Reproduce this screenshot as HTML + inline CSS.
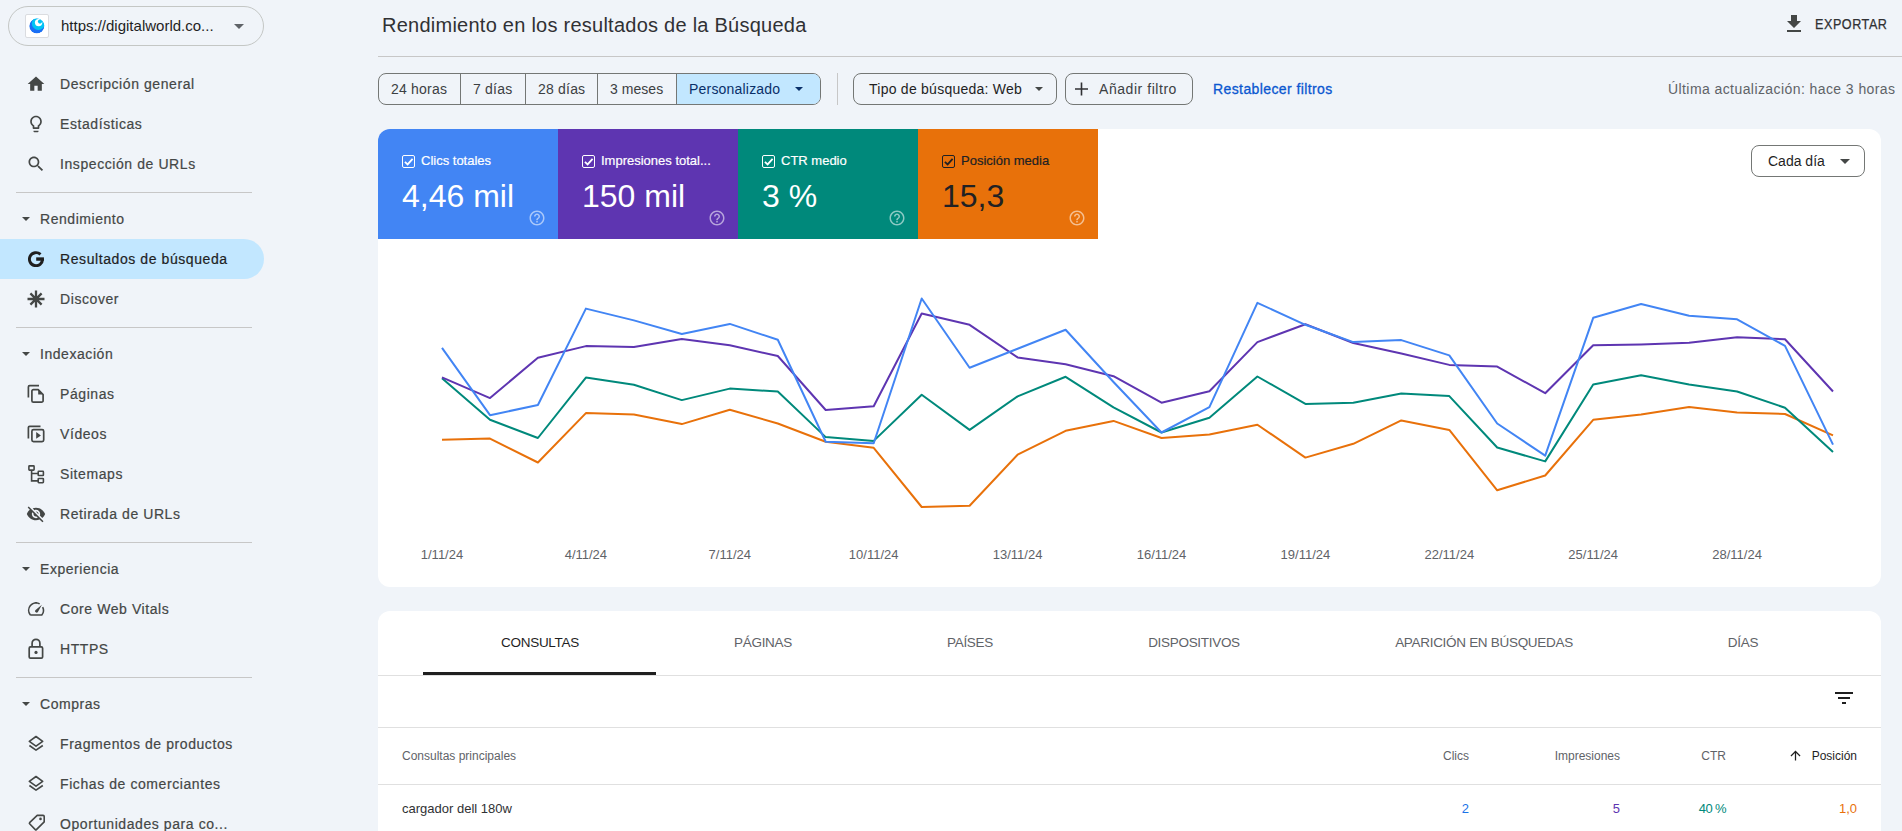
<!DOCTYPE html>
<html><head><meta charset="utf-8">
<style>
*{box-sizing:border-box;margin:0;padding:0}
html,body{width:1902px;height:831px;overflow:hidden;background:#f0f4f9;font-family:"Liberation Sans",sans-serif;color:#1f1f1f}
.a{position:absolute;white-space:nowrap}
.nav{position:absolute;left:60px;font-size:14px;letter-spacing:0.58px;color:#444746;line-height:20px;-webkit-text-stroke:0.2px currentColor}
.ico{position:absolute;left:25px;width:20px;height:20px}
.hdr{position:absolute;left:40px;font-size:14px;letter-spacing:0.55px;color:#444746;line-height:20px;-webkit-text-stroke:0.2px currentColor}
.tri{position:absolute;left:22px;width:0;height:0;border-left:4px solid transparent;border-right:4px solid transparent;border-top:4px solid #444746}
.div{position:absolute;left:16px;width:236px;height:1px;background:#c7c7c7}
.btn{position:absolute;top:73px;height:32px;border:1px solid #747775;border-radius:8px}
.seg{position:absolute;top:74px;height:32px;font-size:14px;line-height:30px;color:#3c4043}
.tile{position:absolute;top:129px;width:180px;height:110px;color:#fff}
.tile .cb{position:absolute;left:24px;top:26px;width:13px;height:13px;border:1.5px solid #fff;border-radius:2px}
.tile .lb{position:absolute;left:43px;top:24px;font-size:13px;line-height:16px;white-space:nowrap;-webkit-text-stroke:0.2px currentColor}
.tile .val{position:absolute;left:24px;top:47px;font-size:32px;line-height:40px;white-space:nowrap}
.tile .hp{position:absolute;left:150px;top:80px;width:18px;height:18px}
.xl{position:absolute;top:547px;font-size:13px;line-height:16px;color:#5f6368;width:80px;text-align:center}
.tab{position:absolute;top:633px;font-size:13.5px;letter-spacing:-0.3px;line-height:20px;color:#5f6368;text-align:center;width:240px}
.th{position:absolute;top:748px;font-size:12px;line-height:16px;color:#5f6368;text-align:right}
.td{position:absolute;top:800px;font-size:13px;line-height:18px;text-align:right;color:#303134}
</style></head><body>

<!-- ===== SIDEBAR ===== -->
<div class="a" style="left:8px;top:6px;width:256px;height:40px;border:1px solid #c4c7c5;border-radius:20px"></div>
<div class="a" style="left:25px;top:14px;width:24px;height:24px;background:#fff;border:1px solid #dadce0;border-radius:2px"></div>
<svg class="a" style="left:29px;top:18px" width="16" height="16" viewBox="0 0 16 16">
 <defs><clipPath id="fc"><circle cx="7.8" cy="8" r="7.6"/></clipPath></defs>
 <g clip-path="url(#fc)">
 <circle cx="7.8" cy="8" r="7.6" fill="#1a6ff5"/>
 <circle cx="9.4" cy="5.4" r="6.6" fill="#00c4f4"/>
 <circle cx="9.6" cy="4.6" r="3.7" fill="#fff"/>
 <circle cx="11" cy="3.6" r="2.1" fill="#00c4f4"/>
 </g>
</svg>
<div class="a" style="left:61px;top:16px;font-size:15px;line-height:20px;color:#1f1f1f">https://digitalworld.co...</div>
<div class="a" style="left:234px;top:24px;width:0;height:0;border-left:5px solid transparent;border-right:5px solid transparent;border-top:5px solid #5f6368"></div>

<!-- nav items -->
<svg class="ico" style="top:74px;left:26px" viewBox="0 0 24 24"><path fill="#444746" d="M10 20v-6h4v6h5v-8h3L12 3 2 12h3v8z"/></svg>
<div class="nav" style="top:74px">Descripción general</div>
<svg class="ico" style="top:114px;left:26px" viewBox="0 0 24 24"><path fill="#444746" d="M9 21c0 .55.45 1 1 1h4c.55 0 1-.45 1-1v-1H9v1zm3-19C8.14 2 5 5.14 5 9c0 2.38 1.19 4.47 3 5.74V17c0 .55.45 1 1 1h6c.55 0 1-.45 1-1v-2.26c1.81-1.270 3-3.36 3-5.74 0-3.86-3.14-7-7-7zm2.85 11.1l-.85.6V16h-4v-2.3l-.85-.6C7.8 12.16 7 10.630 7 9c0-2.76 2.24-5 5-5s5 2.24 5 5c0 1.63-.8 3.16-2.15 4.1z"/></svg>
<div class="nav" style="top:114px">Estadísticas</div>
<svg class="ico" style="top:154px;left:26px" viewBox="0 0 24 24"><path fill="#444746" d="M15.5 14h-.79l-.28-.27C15.41 12.59 16 11.11 16 9.5 16 5.91 13.09 3 9.5 3S3 5.910 3 9.5 5.91 16 9.5 16c1.61 0 3.09-.59 4.23-1.57l.27.28v.79l5 4.99L20.49 19l-4.99-5zm-6 0C7.01 14 5 11.99 5 9.5S7.01 5 9.5 5 14 7.01 14 9.5 11.99 14 9.5 14z"/></svg>
<div class="nav" style="top:154px">Inspección de URLs</div>

<div class="div" style="top:192px"></div>
<div class="tri" style="top:217px"></div>
<div class="hdr" style="top:209px">Rendimiento</div>

<div class="a" style="left:0;top:239px;width:264px;height:40px;background:#c2e7ff;border-radius:0 20px 20px 0"></div>
<svg class="a" style="left:28px;top:251px" width="16" height="16" viewBox="0 0 16 16"><path fill="none" stroke="#1f1f1f" stroke-width="2.9" d="M12.5 3.4A6.55 6.55 0 1 0 14.55 8"/><rect x="8.2" y="6.35" width="7.75" height="3.4" fill="#1f1f1f"/></svg>
<div class="nav" style="top:249px;color:#1f1f1f">Resultados de búsqueda</div>
<svg class="a" style="left:27px;top:290px" width="18" height="18" viewBox="0 0 18 18"><g stroke="#444746" stroke-width="2.3"><path d="M9 0.5V17.5M0.5 9H17.5M3.4 3.4L14.6 14.6M14.6 3.4L3.4 14.6"/><circle cx="9" cy="9" r="2.6" fill="#444746" stroke="none"/></g></svg>
<div class="nav" style="top:289px">Discover</div>

<div class="div" style="top:327px"></div>
<div class="tri" style="top:352px"></div>
<div class="hdr" style="top:344px">Indexación</div>

<svg class="a" style="left:22px;top:382px" width="28" height="28" viewBox="0 0 28 28"><g fill="none" stroke="#444746" stroke-width="1.7" stroke-linejoin="round"><path d="M6.4 15.5V4.9a1.2 1.2 0 0 1 1.2-1.2H17"/><path d="M16.2 7.6H11.4a1.5 1.5 0 0 0-1.5 1.5V18.7a1.5 1.5 0 0 0 1.5 1.5H19.6a1.5 1.5 0 0 0 1.5-1.5V12.5z"/></g><path fill="#444746" d="M16.2 7.6V12.6H21.1z"/></svg>
<div class="nav" style="top:384px">Páginas</div>
<svg class="a" style="left:22px;top:422px" width="28" height="28" viewBox="0 0 28 28"><g fill="none" stroke="#444746" stroke-width="1.7" stroke-linejoin="round"><path d="M6.4 16.5V5.6a1.2 1.2 0 0 1 1.2-1.2H18.5"/><rect x="9.9" y="7.6" width="11.8" height="12" rx="1.6"/></g><path fill="#444746" d="M14.2 10V16.8L18.9 13.4z"/></svg>
<div class="nav" style="top:424px">Vídeos</div>
<svg class="a" style="left:22px;top:462px" width="28" height="28" viewBox="0 0 28 28"><g fill="none" stroke="#444746" stroke-width="1.6"><rect x="6.9" y="3.9" width="5.2" height="4.2" rx=".6"/><rect x="16.2" y="9.3" width="5.2" height="4.2" rx=".6"/><rect x="16.2" y="16.5" width="5.2" height="4.2" rx=".6"/><path d="M9.6 8.1V18.9H16.2M9.6 11.5H16.2"/></g></svg>
<div class="nav" style="top:464px">Sitemaps</div>
<svg class="a" style="left:26px;top:504px" width="20" height="20" viewBox="0 0 24 24"><path fill="#444746" d="M12 7c2.76 0 5 2.24 5 5 0 .65-.13 1.26-.36 1.83l2.92 2.92c1.51-1.26 2.7-2.89 3.43-4.75-1.73-4.39-6-7.5-11-7.5-1.4 0-2.74.25-3.98.7l2.16 2.16C10.74 7.13 11.35 7 12 7zM2 4.27l2.28 2.28.46.46C3.08 8.3 1.78 10.02 1 12c1.73 4.39 6 7.5 11 7.5 1.55 0 3.03-.3 4.38-.84l.42.42L19.730 22 21 20.73 3.27 3 2 4.27zM7.53 9.8l1.55 1.55c-.05.21-.08.43-.08.65 0 1.66 1.34 3 3 3 .22 0 .44-.03.65-.08l1.55 1.55c-.67.33-1.41.53-2.2.53-2.76 0-5-2.24-5-5 0-.79.2-1.53.53-2.2zm4.31-.78l3.15 3.15.02-.16c0-1.66-1.34-3-3-3l-.17.01z"/></svg>
<div class="nav" style="top:504px">Retirada de URLs</div>

<div class="div" style="top:542px"></div>
<div class="tri" style="top:567px"></div>
<div class="hdr" style="top:559px">Experiencia</div>

<svg class="a" style="left:22px;top:596px" width="28" height="28" viewBox="0 0 28 28"><g fill="none" stroke="#444746" stroke-width="1.6"><path d="M8.3 19A7.4 7.4 0 0 1 17.64 7.88M20.67 11.04A7.4 7.4 0 0 1 19.8 19H8.3"/></g><path fill="#444746" d="M19.9 8.8L15.9 15.9A1.5 1.5 0 0 1 13.3 14.2z"/><rect x="12.9" y="6.1" width="2.4" height="1.3" rx=".6" fill="#444746"/></svg>
<div class="nav" style="top:599px">Core Web Vitals</div>
<svg class="a" style="left:22px;top:636px" width="28" height="28" viewBox="0 0 28 28"><g fill="none" stroke="#444746" stroke-width="1.7"><rect x="7.2" y="10.9" width="13.4" height="11.3" rx="1.3"/><path d="M10.1 10.9V7.2a3.9 3.9 0 0 1 7.8 0V10.9"/></g><circle cx="14" cy="16.4" r="1.6" fill="#444746"/></svg>
<div class="nav" style="top:639px">HTTPS</div>

<div class="div" style="top:677px"></div>
<div class="tri" style="top:702px"></div>
<div class="hdr" style="top:694px">Compras</div>

<svg class="a" style="left:22px;top:730px" width="28" height="28" viewBox="0 0 28 28"><g fill="none" stroke="#444746" stroke-width="1.6" stroke-linejoin="round"><path d="M14 6.5L20.7 11.4 14 16.2 7.3 11.4z"/><path d="M7.4 15.5L14 20.2 20.8 15.5"/></g></svg>
<div class="nav" style="top:734px">Fragmentos de productos</div>
<svg class="a" style="left:22px;top:770px" width="28" height="28" viewBox="0 0 28 28"><g fill="none" stroke="#444746" stroke-width="1.6" stroke-linejoin="round"><path d="M14 6.5L20.7 11.4 14 16.2 7.3 11.4z"/><path d="M7.4 15.5L14 20.2 20.8 15.5"/></g></svg>
<div class="nav" style="top:774px">Fichas de comerciantes</div>
<svg class="a" style="left:22px;top:810px" width="28" height="28" viewBox="0 0 28 28"><g fill="none" stroke="#444746" stroke-width="1.6" stroke-linejoin="round"><path d="M15.2 5.4H21.1a1.1 1.1 0 0 1 1.1 1.1V11.9L14.4 19.6a.8 .8 0 0 1-1.1 0L7.6 13.8a.8 .8 0 0 1 0-1.1z"/></g><circle cx="18.5" cy="8.9" r="1.3" fill="#444746"/></svg>
<div class="nav" style="top:814px">Oportunidades para co...</div>

<!-- ===== HEADER ===== -->
<div class="a" style="left:382px;top:13px;font-size:20px;line-height:24px;letter-spacing:0.25px;color:#303134">Rendimiento en los resultados de la Búsqueda</div>
<svg class="a" style="left:1782px;top:12px" width="24" height="24" viewBox="0 0 24 24"><path fill="#444746" d="M19 9h-4V3H9v6H5l7 7 7-7zM5 18v2h14v-2H5z"/></svg>
<div class="a" style="left:1815px;top:14px;font-size:14px;line-height:20px;letter-spacing:0.6px;color:#303134;-webkit-text-stroke:0.25px #303134;transform:scaleX(0.9);transform-origin:left">EXPORTAR</div>
<div class="a" style="left:378px;top:56px;width:1524px;height:1px;background:#c7c7c7"></div>

<!-- ===== FILTER ROW ===== -->
<div class="btn" style="left:378px;width:443px"></div>
<div class="a" style="left:676px;top:74px;width:144px;height:30px;background:#c2e7ff;border-radius:0 7px 7px 0"></div>
<div class="a" style="left:460px;top:73px;width:1px;height:32px;background:#747775"></div>
<div class="a" style="left:525px;top:73px;width:1px;height:32px;background:#747775"></div>
<div class="a" style="left:597px;top:73px;width:1px;height:32px;background:#747775"></div>
<div class="a" style="left:676px;top:73px;width:1px;height:32px;background:#747775"></div>
<div class="seg" style="left:391px;letter-spacing:0.2px">24 horas</div>
<div class="seg" style="left:473px;letter-spacing:0.2px">7 días</div>
<div class="seg" style="left:538px;letter-spacing:0.2px">28 días</div>
<div class="seg" style="left:610px;letter-spacing:0.05px">3 meses</div>
<div class="seg" style="left:689px;letter-spacing:0.2px;color:#0a3069">Personalizado</div>
<div class="a" style="left:795px;top:87px;border-left:4.5px solid transparent;border-right:4.5px solid transparent;border-top:4.5px solid #0a3069"></div>
<div class="a" style="left:837px;top:73px;width:1px;height:32px;background:#c7c7c7"></div>

<div class="btn" style="left:853px;width:204px"></div>
<div class="seg" style="left:869px;letter-spacing:0.25px;color:#1f1f1f">Tipo de búsqueda: Web</div>
<div class="a" style="left:1035px;top:87px;border-left:4.5px solid transparent;border-right:4.5px solid transparent;border-top:4.5px solid #444746"></div>
<div class="btn" style="left:1065px;width:128px"></div>
<svg class="a" style="left:1074px;top:82px" width="15" height="14" viewBox="0 0 15 14"><path stroke="#303134" stroke-width="1.6" d="M7.5 0.5V13.5M1 7H14"/></svg>
<div class="seg" style="left:1099px;letter-spacing:0.55px">Añadir filtro</div>
<div class="seg" style="left:1213px;letter-spacing:0.4px;color:#0b57d0;-webkit-text-stroke:0.3px #0b57d0">Restablecer filtros</div>
<div class="a" style="left:1668px;top:79px;font-size:14px;line-height:20px;letter-spacing:0.42px;color:#5f6368">Última actualización: hace 3 horas</div>

<!-- ===== CHART CARD ===== -->
<div class="a" style="left:378px;top:129px;width:1503px;height:458px;background:#fff;border-radius:12px"></div>
<div class="tile" style="left:378px;background:#4285f4;border-top-left-radius:12px">
 <div class="cb"></div><svg class="a" style="left:26px;top:28px" width="10" height="10" viewBox="0 0 10 10"><path d="M0.9 4.9L3.6 7.4 8.6 1.9" fill="none" stroke="#fff" stroke-width="1.8"/></svg>
 <div class="lb">Clics totales</div><div class="val">4,46 mil</div>
 <svg class="hp" viewBox="0 0 24 24"><path fill="rgba(255,255,255,.55)" d="M11 18h2v-2h-2v2zm1-16C6.48 2 2 6.48 2 12s4.48 10 10 10 10-4.48 10-10S17.52 2 12 2zm0 18c-4.41 0-8-3.59-8-8s3.59-8 8-8 8 3.59 8 8-3.59 8-8 8zm0-14c-2.21 0-4 1.79-4 4h2c0-1.1.9-2 2-2s2 .9 2 2c0 2-3 1.75-3 5h2c0-2.25 3-2.5 3-5 0-2.21-1.79-4-4-4z"/></svg>
</div>
<div class="tile" style="left:558px;background:#5e35b1">
 <div class="cb"></div><svg class="a" style="left:26px;top:28px" width="10" height="10" viewBox="0 0 10 10"><path d="M0.9 4.9L3.6 7.4 8.6 1.9" fill="none" stroke="#fff" stroke-width="1.8"/></svg>
 <div class="lb">Impresiones total...</div><div class="val">150 mil</div>
 <svg class="hp" viewBox="0 0 24 24"><path fill="rgba(255,255,255,.55)" d="M11 18h2v-2h-2v2zm1-16C6.48 2 2 6.48 2 12s4.48 10 10 10 10-4.48 10-10S17.52 2 12 2zm0 18c-4.41 0-8-3.59-8-8s3.590-8 8-8 8 3.59 8 8-3.59 8-8 8zm0-14c-2.21 0-4 1.79-4 4h2c0-1.1.9-2 2-2s2 .9 2 2c0 2-3 1.75-3 5h2c0-2.25 3-2.5 3-5 0-2.21-1.79-4-4-4z"/></svg>
</div>
<div class="tile" style="left:738px;background:#00897b">
 <div class="cb"></div><svg class="a" style="left:26px;top:28px" width="10" height="10" viewBox="0 0 10 10"><path d="M0.9 4.9L3.6 7.4 8.6 1.9" fill="none" stroke="#fff" stroke-width="1.8"/></svg>
 <div class="lb">CTR medio</div><div class="val">3 %</div>
 <svg class="hp" viewBox="0 0 24 24"><path fill="rgba(255,255,255,.55)" d="M11 18h2v-2h-2v2zm1-16C6.48 2 2 6.48 2 12s4.48 10 10 10 10-4.48 10-10S17.52 2 12 2zm0 18c-4.41 0-8-3.59-8-8s3.59-8 8-8 8 3.59 8 8-3.59 8-8 8zm0-14c-2.21 0-4 1.79-4 4h2c0-1.1.9-2 2-2s2 .9 2 2c0 2-3 1.75-3 5h2c0-2.25 3-2.5 3-5 0-2.21-1.79-4-4-4z"/></svg>
</div>
<div class="tile" style="left:918px;background:#e8710a;color:#202124">
 <div class="cb" style="border-color:#202124"></div><svg class="a" style="left:26px;top:28px" width="10" height="10" viewBox="0 0 10 10"><path d="M0.9 4.9L3.6 7.4 8.6 1.9" fill="none" stroke="#202124" stroke-width="1.8"/></svg>
 <div class="lb">Posición media</div><div class="val">15,3</div>
 <svg class="hp" viewBox="0 0 24 24"><path fill="rgba(255,255,255,.55)" d="M11 18h2v-2h-2v2zm1-16C6.48 2 2 6.48 2 12s4.48 10 10 10 10-4.48 10-10S17.52 2 12 2zm0 18c-4.41 0-8-3.59-8-8s3.59-8 8-8 8 3.59 8 8-3.59 8-8 8zm0-14c-2.21 0-4 1.79-4 4h2c0-1.1.9-2 2-2s2 .9 2 2c0 2-3 1.75-3 5h2c0-2.25 3-2.5 3-5 0-2.21-1.79-4-4-4z"/></svg>
</div>

<div class="a" style="left:1751px;top:145px;width:114px;height:32px;border:1px solid #747775;border-radius:8px"></div>
<div class="a" style="left:1768px;top:151px;font-size:14px;line-height:20px;color:#1f1f1f">Cada día</div>
<div class="a" style="left:1840px;top:159px;border-left:5px solid transparent;border-right:5px solid transparent;border-top:5px solid #444746"></div>

<!--CHART-->
<svg class="a" style="left:0;top:0" width="1902" height="831" viewBox="0 0 1902 831">
 <polyline fill="none" stroke="#e8710a" stroke-width="2" stroke-linejoin="round" points="442.0,439.7 490.0,438.6 537.9,462.5 585.9,413.1 633.9,414.6 681.8,424.1 729.8,409.7 777.8,423.5 825.7,441.7 873.7,447.8 921.7,507.0 969.6,505.8 1017.6,454.7 1065.6,430.8 1113.5,420.9 1161.5,438.0 1209.4,434.5 1257.4,424.7 1305.4,457.6 1353.3,443.8 1401.3,420.4 1449.3,429.9 1497.2,490.3 1545.2,475.5 1593.2,419.8 1641.1,414.6 1689.1,407.1 1737.1,412.6 1785.0,414.0 1833.0,435.4"/>
 <polyline fill="none" stroke="#00897b" stroke-width="2" stroke-linejoin="round" points="442.0,378.2 490.0,419.8 537.9,438.0 585.9,377.6 633.9,384.8 681.8,400.1 729.8,388.6 777.8,391.5 825.7,437.1 873.7,440.9 921.7,394.7 969.6,429.9 1017.6,396.4 1065.6,376.8 1113.5,407.4 1161.5,432.5 1209.4,417.8 1257.4,376.5 1305.4,403.9 1353.3,402.7 1401.3,393.5 1449.3,396.1 1497.2,447.5 1545.2,461.4 1593.2,384.5 1641.1,375.3 1689.1,384.5 1737.1,391.5 1785.0,407.7 1833.0,451.9"/>
 <polyline fill="none" stroke="#5e35b1" stroke-width="2" stroke-linejoin="round" points="442.0,377.3 490.0,398.1 537.9,357.7 585.9,346.1 633.9,347.0 681.8,338.9 729.8,345.3 777.8,356.0 825.7,410.0 873.7,406.2 921.7,313.5 969.6,324.8 1017.6,357.4 1065.6,364.3 1113.5,376.2 1161.5,402.7 1209.4,391.2 1257.4,342.1 1305.4,324.2 1353.3,343.0 1401.3,353.6 1449.3,364.9 1497.2,366.6 1545.2,393.2 1593.2,345.3 1641.1,344.4 1689.1,342.7 1737.1,337.2 1785.0,339.2 1833.0,391.5"/>
 <polyline fill="none" stroke="#4285f4" stroke-width="2" stroke-linejoin="round" points="442.0,347.9 490.0,415.2 537.9,405.0 585.9,308.6 633.9,320.4 681.8,334.0 729.8,323.9 777.8,339.8 825.7,441.7 873.7,443.2 921.7,298.5 969.6,367.8 1017.6,348.7 1065.6,329.7 1113.5,382.0 1161.5,432.5 1209.4,407.1 1257.4,302.8 1305.4,324.8 1353.3,342.1 1401.3,340.1 1449.3,355.4 1497.2,423.5 1545.2,455.6 1593.2,317.8 1641.1,304.0 1689.1,315.8 1737.1,319.3 1785.0,345.9 1833.0,444.6"/>
</svg>
<div class="xl" style="left:402.0px">1/11/24</div>
<div class="xl" style="left:545.9px">4/11/24</div>
<div class="xl" style="left:689.8px">7/11/24</div>
<div class="xl" style="left:833.7px">10/11/24</div>
<div class="xl" style="left:977.6px">13/11/24</div>
<div class="xl" style="left:1121.5px">16/11/24</div>
<div class="xl" style="left:1265.4px">19/11/24</div>
<div class="xl" style="left:1409.3px">22/11/24</div>
<div class="xl" style="left:1553.2px">25/11/24</div>
<div class="xl" style="left:1697.1px">28/11/24</div>

<!-- ===== TABLE CARD ===== -->
<div class="a" style="left:378px;top:611px;width:1503px;height:240px;background:#fff;border-radius:12px"></div>
<div class="tab" style="left:420px;color:#1f1f1f">CONSULTAS</div>
<div class="tab" style="left:643px">PÁGINAS</div>
<div class="tab" style="left:850px">PAÍSES</div>
<div class="tab" style="left:1074px">DISPOSITIVOS</div>
<div class="tab" style="left:1364px">APARICIÓN EN BÚSQUEDAS</div>
<div class="tab" style="left:1623px">DÍAS</div>
<div class="a" style="left:378px;top:675px;width:1503px;height:1px;background:#e0e0e0"></div>
<div class="a" style="left:423px;top:672px;width:233px;height:3px;background:#1f1f1f"></div>
<svg class="a" style="left:1832px;top:686px" width="24" height="24" viewBox="0 0 24 24"><path fill="#1f1f1f" d="M10 18h4v-2h-4v2zM3 6v2h18V6H3zm3 7h12v-2H6v2z"/></svg>
<div class="a" style="left:378px;top:727px;width:1503px;height:1px;background:#e0e0e0"></div>
<div class="th" style="left:402px;text-align:left">Consultas principales</div>
<div class="th" style="left:1369px;width:100px">Clics</div>
<div class="th" style="left:1520px;width:100px">Impresiones</div>
<div class="th" style="left:1626px;width:100px">CTR</div>
<div class="th" style="left:1757px;width:100px;color:#1f1f1f">Posición</div>
<svg class="a" style="left:1788px;top:748px" width="15" height="15" viewBox="0 0 24 24"><path fill="#1f1f1f" d="M4 12l1.41 1.41L11 7.83V20h2V7.830l5.58 5.59L20 12l-8-8-8 8z"/></svg>
<div class="a" style="left:378px;top:784px;width:1503px;height:1px;background:#e0e0e0"></div>
<div class="td" style="left:402px;text-align:left;color:#303134">cargador dell 180w</div>
<div class="td" style="left:1369px;width:100px;color:#1a73e8">2</div>
<div class="td" style="left:1520px;width:100px;color:#5e35b1">5</div>
<div class="td" style="left:1626px;width:100px;color:#00897b;letter-spacing:-0.6px;padding-right:0">40 %</div>
<div class="td" style="left:1757px;width:100px;color:#e8710a">1,0</div>

</body></html>
